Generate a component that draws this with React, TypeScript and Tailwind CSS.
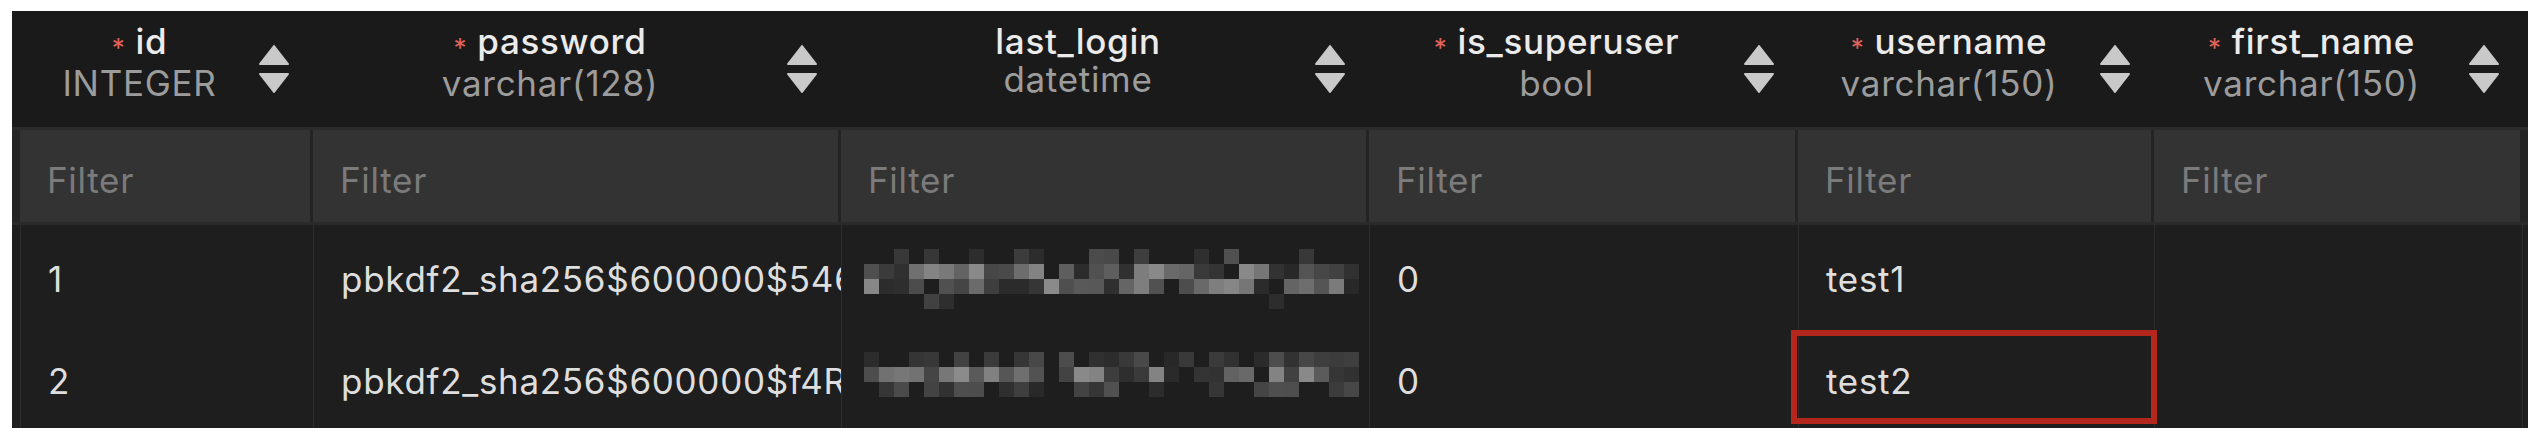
import React from 'react';

type Column = {
  key: string;
  type: string;
  required: boolean;
  width: string;
};

const columns: Column[] = [
  { key: 'id', type: 'INTEGER', required: true, width: 'w-[293px]' },
  { key: 'password', type: 'varchar(128)', required: true, width: 'w-[528px]' },
  { key: 'last_login', type: 'datetime', required: false, width: 'w-[528px]' },
  { key: 'is_superuser', type: 'bool', required: true, width: 'w-[429px]' },
  { key: 'username', type: 'varchar(150)', required: true, width: 'w-[356px]' },
  { key: 'first_name', type: 'varchar(150)', required: true, width: 'w-[369px]' },
];

const rows = [
  {
    id: '1',
    password: 'pbkdf2_sha256$600000$546Yq0dWfL2mZt8rKx',
    blur: { seed: 17, lines: 4 },
    is_superuser: '0',
    username: 'test1',
    first_name: '',
  },
  {
    id: '2',
    password: 'pbkdf2_sha256$600000$f4RkP9sTqv3HnB1cWe',
    blur: { seed: 83, lines: 3 },
    is_superuser: '0',
    username: 'test2',
    first_name: '',
  },
];

function SortArrows() {
  return (
    <svg width="30" height="48" viewBox="0 0 30 48" className="shrink-0">
      <polygon points="15,1 29,19 1,19" fill="#c9c9c9" stroke="#c9c9c9" strokeWidth="2" strokeLinejoin="round" />
      <polygon points="1,29 29,29 15,47" fill="#c9c9c9" stroke="#c9c9c9" strokeWidth="2" strokeLinejoin="round" />
    </svg>
  );
}

// pixelated (redacted) datetime value
function Mosaic({ seed, lines }: { seed: number; lines: number }) {
  let s = seed;
  const rand = () => {
    s = (s * 9301 + 49297) % 233280;
    return s / 233280;
  };
  const cols = 33;
  const size = 15;
  const density = lines === 4 ? [0.3, 0.95, 0.9, 0.12] : [0.55, 0.95, 0.5];
  const cells: React.ReactNode[] = [];
  for (let r = 0; r < lines; r++) {
    for (let c = 0; c < cols; c++) {
      if (rand() > density[r]) continue;
      const v = Math.round(40 + rand() * (r === 0 || r === lines - 1 ? 40 : 100));
      cells.push(
        <rect key={`${r}-${c}`} x={c * size} y={r * size} width={size} height={size} fill={`rgb(${v},${v},${v})`} />
      );
    }
  }
  return (
    <svg width={cols * size} height={lines * size} className="shrink-0">
      {cells}
    </svg>
  );
}

export default function App() {
  return (
    <div className="min-h-screen bg-white pt-[11px] pl-[12px] font-['Inter','Noto_Sans',sans-serif]">
      <div className="relative w-[2516px] bg-[#1e1e1e]">
        {/* Header */}
        <div className="flex h-[116px] bg-[#1a1a1a] pl-[8px] pr-[5px]">
          {columns.map((col) => (
            <div key={col.key} className={`flex items-center pr-[24px] ${col.width}`}>
              <div className="flex flex-1 flex-col items-center self-start pt-[10px] text-[35px] tracking-[0.02em] whitespace-nowrap">
                <div className="leading-[40px] font-medium text-[#ebebeb]">
                  {col.required && (
                    <span className="mr-[10px] inline-block translate-y-[3px] text-[26px] font-normal text-[#e0635a]">*</span>
                  )}
                  {col.key}
                </div>
                <div className="leading-[36px] text-[#9c9c9c]">{col.type}</div>
              </div>
              <SortArrows />
            </div>
          ))}
        </div>

        {/* Filter row */}
        <div className="flex border-t-[3px] border-b-[3px] border-t-[#2b2b2b] border-b-[#2a2a2a] bg-[#242424] pl-[8px] pr-[5px]">
          {columns.map((col) => (
            <div key={col.key} className={`h-[92px] border-r-[3px] border-[#242424] ${col.width}`}>
              <div className="flex h-full items-center bg-[#333333] pt-[8px] pl-[27px] text-[35px] tracking-[0.02em] text-[#7b7b7b]">
                Filter
              </div>
            </div>
          ))}
        </div>

        {/* Data rows */}
        {rows.map((row, i) => (
          <div key={row.id} className={`flex pl-[8px] pr-[5px] ${i === 0 ? 'h-[101px]' : 'h-[102px]'}`}>
            {columns.map((col, ci) => {
              const base = `relative flex overflow-hidden whitespace-nowrap border-l border-[#2c2c2c] ${col.width} ${
                ci === columns.length - 1 ? 'border-r' : ''
              }`;
              if (col.key === 'last_login') {
                return (
                  <div key={col.key} className={`${base} items-start pl-[22px] ${i === 0 ? 'pt-[24px]' : 'pt-[26px]'}`}>
                    <Mosaic seed={row.blur.seed} lines={row.blur.lines} />
                  </div>
                );
              }
              const value = row[col.key as keyof typeof row] as string;
              return (
                <div
                  key={col.key}
                  className={`${base} items-center pt-[8px] pl-[27px] text-[35px] tracking-[0.02em] text-[#dedede]`}
                >
                  {value}
                </div>
              );
            })}
          </div>
        ))}

        {/* annotation box on row 2 username */}
        <div className="pointer-events-none absolute left-[1779px] top-[319px] h-[94px] w-[366px] border-[6px] border-[#b3271d]" />
      </div>
    </div>
  );
}
